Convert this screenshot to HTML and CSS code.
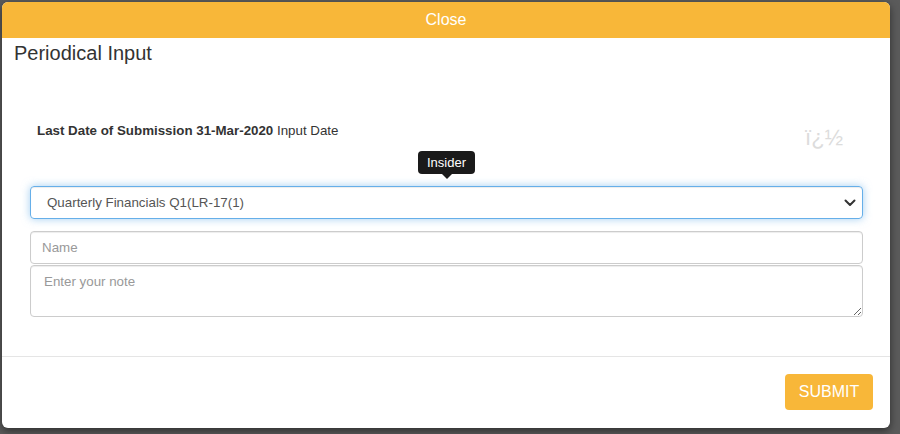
FILE: index.html
```html
<!DOCTYPE html>
<html>
<head>
<meta charset="utf-8">
<link rel="stylesheet" href="styles.css">
</head>
<body>
<div class="modal">
  <div class="close-bar">Close</div>
  <h4 class="title">Periodical Input</h4>
  <div class="modal-body">
    <div class="info-row">
      <p class="info"><b>Last Date of Submission 31-Mar-2020</b> Input Date</p>
      <span class="garbled">ï¿½</span>
    </div>
    <div class="select-group">
      <div class="tooltip">Insider</div>
      <div class="select">
        <span>Quarterly Financials Q1(LR-17(1)</span>
        <svg width="12" height="8" viewBox="0 0 12 8"><path d="M1.5 1.5 L6 6 L10.5 1.5" fill="none" stroke="#333" stroke-width="2" stroke-linecap="round" stroke-linejoin="round"/></svg>
      </div>
    </div>
    <input class="field" type="text" placeholder="Name">
    <textarea class="note" placeholder="Enter your note"></textarea>
  </div>
  <div class="modal-footer">
    <button class="submit">SUBMIT</button>
  </div>
</div>
</body>
</html>
```
FILE: styles.css
```css
html, body {
  margin: 0;
  padding: 0;
}
body {
  background: #5b5b5b;
  font-family: "Liberation Sans", Arial, sans-serif;
  width: 900px;
  height: 434px;
  overflow: hidden;
  padding-top: 2px;
  padding-left: 2px;
  box-sizing: border-box;
}
.modal {
  width: 888px;
  height: 426px;
  background: #fff;
  border-radius: 6px;
  box-shadow: 0 3px 9px rgba(0,0,0,0.5);
  display: flex;
  flex-direction: column;
  position: relative;
}
.close-bar {
  height: 36px;
  line-height: 36px;
  background: #f8b739;
  color: #fff;
  text-align: center;
  font-size: 16px;
  border-radius: 6px 6px 0 0;
}
.title {
  margin: 4px 0 0 12px;
  font-size: 20px;
  line-height: 22px;
  font-weight: normal;
  color: #333;
}
.modal-body {
  padding: 59px 27px 0 28px;
  height: 293px;
  box-sizing: border-box;
  border-bottom: 1px solid #e5e5e5;
  flex: none;
}
.info-row {
  display: flex;
  justify-content: space-between;
  align-items: flex-start;
  padding: 0 20px 0 7px;
  height: 63px;
}
.info {
  margin: 0;
  font-size: 13.33px;
  line-height: 16px;
  color: #333;
}
.garbled {
  font-size: 22px;
  color: #dcdcdc;
  line-height: 24px;
  margin-top: 3px;
}
.select-group {
  position: relative;
}
.tooltip {
  position: absolute;
  left: 388px;
  top: -35px;
  background: #1a1a1a;
  color: #fff;
  font-size: 13px;
  line-height: 17px;
  padding: 3px 9px;
  border-radius: 4px;
}
.tooltip::after {
  content: "";
  position: absolute;
  left: 24px;
  bottom: -5px;
  border-left: 5px solid transparent;
  border-right: 5px solid transparent;
  border-top: 5px solid #1a1a1a;
}
.select {
  height: 33px;
  box-sizing: border-box;
  border: 1px solid #66afe9;
  border-radius: 4px;
  box-shadow: inset 0 1px 1px rgba(0,0,0,0.075), 0 0 8px rgba(102,175,233,0.6);
  display: flex;
  align-items: center;
  justify-content: space-between;
  padding: 0 6px 0 16px;
  font-size: 13.33px;
  color: #555;
}
.field {
  display: block;
  width: 100%;
  height: 33px;
  box-sizing: border-box;
  margin-top: 12px;
  border: 1px solid #ccc;
  border-radius: 4px;
  box-shadow: inset 0 1px 1px rgba(0,0,0,0.075);
  padding: 0 11px;
  font-family: "Liberation Sans", Arial, sans-serif;
  font-size: 13.33px;
  color: #555;
}
.note {
  display: block;
  width: 100%;
  height: 52px;
  box-sizing: border-box;
  margin: 1px 0 0 0;
  border: 1px solid #ccc;
  border-radius: 4px;
  box-shadow: inset 0 1px 1px rgba(0,0,0,0.075);
  padding: 8px 13px;
  font-family: "Liberation Sans", Arial, sans-serif;
  font-size: 13.33px;
  color: #555;
}
.field::placeholder, .note::placeholder {
  color: #999;
}
.modal-footer {
  display: flex;
  justify-content: flex-end;
  padding: 17px 17px 0 0;
}
.submit {
  width: 88px;
  height: 36px;
  background: #f8b739;
  color: #fff;
  border: none;
  border-radius: 4px;
  font-family: "Liberation Sans", Arial, sans-serif;
  font-size: 16px;
  padding: 0;
}
```
